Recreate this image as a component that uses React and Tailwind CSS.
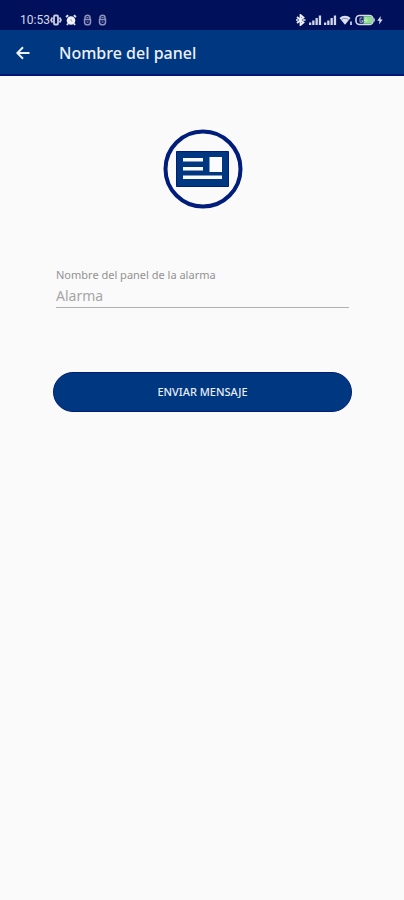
function VibrateIcon() {
  return (
    <svg width="12" height="12" viewBox="0 0 12 12" fill="none" stroke="#c9cde2" aria-hidden="true">
      <rect x="4" y="1.500" width="4" height="9" rx="1" strokeWidth="1.800" />
      <path d="M2.500 3.500 1 6l1.500 2.500M9.500 3.500 11 6 9.500 8.500" strokeWidth="1.800" />
    </svg>
  );
}

function AlarmIcon() {
  return (
    <svg width="12" height="12" viewBox="0 0 12 12" fill="none" aria-hidden="true">
      <circle cx="6" cy="6.500" r="4.300" fill="#f1f2fa" />
      <path d="M1 3 3.200 1.300M11 3 8.800 1.300M3 9.500 2 11M9 9.500 10 11" stroke="#e4e6f3" strokeWidth="1.800" />
      <path d="M6 5v1.700l1.300.6" stroke="#8b92bd" strokeWidth=".9" />
    </svg>
  );
}

function LockedCardIcon() {
  return (
    <svg width="9" height="12" viewBox="0 0 9 12" fill="none" stroke="#8d93bd" aria-hidden="true">
      <path d="M2 5V3.500a2.500 2.300 0 0 1 5 0V5" strokeWidth="1.500" />
      <path d="M1.500 5.500h6v2.700a3 2.600 0 0 1-6 0z" strokeWidth="1.500" />
      <path d="M3.500 3.500h2M3.500 8h2" strokeWidth="1.200" />
    </svg>
  );
}

function BluetoothIcon() {
  return (
    <svg width="11" height="12" viewBox="0 0 11 12" fill="none" stroke="#eef0fa" aria-hidden="true">
      <path d="m1 3 6.500 5.500L4.500 11V1l3 2.500L1 9" strokeWidth="1.800" />
      <path d="M0 6h2M7 6h2.500" strokeWidth="1.600" />
    </svg>
  );
}

function SignalIcon() {
  return (
    <svg width="13" height="12" viewBox="0 0 13 12" fill="#d3d6e8" aria-hidden="true">
      <path d="M0 8.500h2.300V11H0zM3.200 6.500h2.300V11H3.200zM6.500 4h2.300v7H6.500zM9.800 1.500h2.300V11H9.800z" />
    </svg>
  );
}

function WifiIcon() {
  return (
    <svg width="14" height="12" viewBox="0 0 14 12" fill="none" aria-hidden="true">
      <path d="M.5 4a7.700 7.700 0 0 1 11 0L6 10.800z" fill="#dfe1ef" />
      <path d="M2.500 5.700a5 5 0 0 1 7 0" stroke="#7078a8" strokeWidth=".8" />
      <path d="M12 7.500V11" stroke="#cdd0e4" strokeWidth="1.800" />
    </svg>
  );
}

function BatteryIcon() {
  return (
    <svg width="20" height="12" viewBox="0 0 20 12" fill="none" aria-hidden="true">
      <rect x="1" y="1.500" width="17" height="9" rx="3.500" stroke="#d7dae9" strokeWidth="1.600" />
      <path d="M8.500 2.300H15a2.300 2.300 0 0 1 2.300 2.300v2.800A2.300 2.300 0 0 1 15 9.700H8.500z" fill="#8fdd91" />
      <path d="M7.500 4H5v4.200h2.500V6.300H6.300" stroke="#aeb4d3" strokeWidth="1" />
      <path d="M11 3.500v5M9 6.300h4" stroke="#c2efc4" strokeWidth="1" />
      <path d="M19.300 4.500v3" stroke="#d7dae9" strokeWidth="1" />
    </svg>
  );
}

function BoltIcon() {
  return (
    <svg width="6" height="12" viewBox="0 0 6 12" fill="#dfe1ef" aria-hidden="true">
      <path d="M3.700 2 .3 6.700h2.200L2 10.500l3.700-5H3.500z" />
    </svg>
  );
}

function StatusBar() {
  return (
    <div className="flex h-[30px] items-center justify-between bg-[#00105a] pl-5 pr-[21px] pt-[10px]">
      <div className="flex items-center">
        <span className="font-['Roboto',sans-serif] text-[12px] leading-4 text-[#d5d8ea]">10:53</span>
        <VibrateIcon />
        <div className="ml-[3px] flex items-center gap-[6px]">
          <AlarmIcon />
          <LockedCardIcon />
          <LockedCardIcon />
        </div>
      </div>
      <div className="flex items-center gap-[2px]">
        <BluetoothIcon />
        <SignalIcon />
        <SignalIcon />
        <WifiIcon />
        <BatteryIcon />
        <BoltIcon />
      </div>
    </div>
  );
}

function PanelBadge() {
  return (
    <svg width="80" height="80" viewBox="0 0 80 80" fill="none" aria-hidden="true">
      <circle cx="40" cy="40" r="37.500" stroke="#001d7b" strokeWidth="4" />
      <path d="M13.500 22.500h52v35h-52z" fill="#003781" stroke="#001d7b" />
      <path d="M20 29h20v3.500H20zM20 38h20v3.500H20zM20 46.500h39V50H20zM46.500 28H59v15H46.500z" fill="#fbfbfd" />
    </svg>
  );
}

export default function App() {
  return (
    <div className="min-h-screen bg-[#fafafa] font-['Noto_Sans',sans-serif]">
      <StatusBar />
      <header className="flex h-[46px] items-center border-b-2 border-[#00147a] bg-[#003781] pl-4 pt-[2px]">
        <button type="button" aria-label="Volver" className="text-[#edf1f8]">
          <svg width="14" height="14" viewBox="0 0 14 14" fill="none" stroke="currentColor" strokeWidth="2" aria-hidden="true">
            <path d="M13.500 7H1.500M7 1.200 1.300 7 7 12.800" />
          </svg>
        </button>
        <h1 className="ml-[29px] text-[16px] font-medium leading-6 text-[#edf1f8]">Nombre del panel</h1>
      </header>
      <main className="pl-[53px] pr-[52px] pt-[53px]">
        <div className="flex justify-center">
          <PanelBadge />
        </div>
        <form onSubmit={(event) => event.preventDefault()}>
          <div className="mx-[3px] mt-[58px]">
            <label htmlFor="panel" className="block text-[11px] leading-4 text-[#929292]">
              Nombre del panel de la alarma
            </label>
            <input
              id="panel"
              type="text"
              placeholder="Alarma"
              className="block h-[25px] w-full border-b border-[#b0b0b0] bg-transparent text-[14px] text-[#666] outline-none placeholder:text-[#a6a6a6]"
            />
          </div>
          <button
            type="submit"
            className="mt-16 block h-10 w-full rounded-full border border-[#001d7b] bg-[#003781] text-[11px] font-medium leading-4 text-[#e8edf6]"
          >
            ENVIAR MENSAJE
          </button>
        </form>
      </main>
    </div>
  );
}
